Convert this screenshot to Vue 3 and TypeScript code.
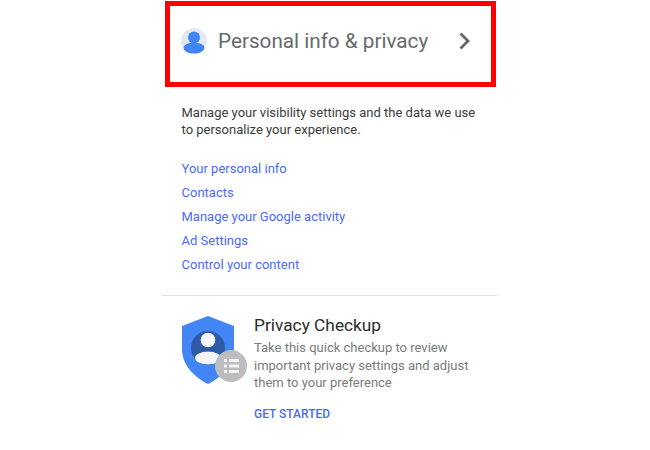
<script setup lang="ts">
const links: string[] = [
  'Your personal info',
  'Contacts',
  'Manage your Google activity',
  'Ad Settings',
  'Control your content',
]
</script>

<template>
  <div class="page">
    <header class="head">
      <svg class="avatar" width="26" height="26" viewBox="0 0 26 26">
        <circle cx="13" cy="13" r="13" fill="#e1e9f3" />
        <circle cx="13" cy="9.5" r="6" fill="#4285f4" />
        <ellipse cx="13" cy="20" rx="10.5" ry="5.5" fill="#4285f4" />
      </svg>
      <span class="title">Personal info &amp; privacy</span>
      <svg class="chevron" width="14" height="20" viewBox="0 0 14 20">
        <path d="M2.5 2.5l7.5 7.5-7.5 7.5" fill="none" stroke="#666" stroke-width="2.8" />
      </svg>
    </header>
    <p class="intro">Manage your visibility settings and the data we use to personalize your experience.</p>
    <nav class="links">
      <a v-for="l in links" :key="l" class="link">{{ l }}</a>
    </nav>
    <section class="checkup">
      <div class="badge">
        <svg width="67" height="68" viewBox="0 0 67 68">
          <path d="M27 0L53 10V33C53 49 41 61 27 68C13 61 1 49 1 33V10Z" fill="#4285f4" />
          <circle cx="27" cy="32" r="17" fill="#2f5aa8" />
          <circle cx="27" cy="24" r="7.3" fill="#f4f6fa" />
          <ellipse cx="27" cy="42" rx="13" ry="6.5" fill="#f4f6fa" />
          <circle cx="50" cy="50" r="16" fill="#bdbdbf" />
          <g fill="#f4f4f4">
            <rect x="43" y="43" width="3" height="3" />
            <rect x="48" y="43" width="10" height="3" />
            <rect x="43" y="48.5" width="3" height="3" />
            <rect x="48" y="48.5" width="10" height="3" />
            <rect x="43" y="54" width="3" height="3" />
            <rect x="48" y="54" width="10" height="3" />
          </g>
        </svg>
      </div>
      <div class="body">
        <h2 class="check-title">Privacy Checkup</h2>
        <p class="check-text">Take this quick checkup to review important privacy settings and adjust them to your preference</p>
        <a class="cta">GET STARTED</a>
      </div>
    </section>
    <div class="frame"></div>
  </div>
</template>

<style>
html, body { margin: 0; background: #fff; }
</style>

<style scoped>
.page {
  position: relative;
  width: 650px;
  height: 450px;
  overflow: hidden;
  padding: 0 0 0 161px;
  box-sizing: border-box;
  font-family: Roboto, "Liberation Sans", sans-serif;
  background: #fff;
}
.head {
  display: flex;
  align-items: center;
  width: 336px;
  height: 82px;
  padding: 0 25px 0 20px;
  box-sizing: border-box;
}
.avatar { flex: none; }
.title {
  margin-left: 11px;
  font-size: 20.7px;
  color: #666a6e;
  white-space: nowrap;
}
.chevron { margin-left: auto; flex: none; }
.intro {
  width: 300px;
  margin: 22px 0 0 20.5px;
  font-size: 13px;
  line-height: 17px;
  color: #3c3c3c;
}
.links {
  display: flex;
  flex-direction: column;
  gap: 6px;
  margin: 22px 0 0 20.5px;
}
.link {
  font-size: 13px;
  line-height: 18px;
  color: #4a6cf7;
}
.checkup {
  display: flex;
  width: 336px;
  margin-top: 21px;
  padding: 20px 0 0 20px;
  border-top: 1px solid #e0e0e0;
  box-sizing: border-box;
}
.badge { width: 73px; flex: none; }
.body { flex: 1; margin-top: -1px; }
.check-title {
  margin: 0;
  font-size: 17.3px;
  font-weight: 400;
  line-height: 20px;
  color: #2b2b2b;
}
.check-text {
  width: 225px;
  margin: 4px 0 0;
  font-size: 13px;
  line-height: 17.5px;
  color: #7b7b7b;
}
.cta {
  display: block;
  margin-top: 15px;
  font-size: 12px;
  font-weight: 500;
  color: #4a6cf7;
}
.frame {
  position: absolute;
  left: 165px;
  top: 1px;
  width: 331px;
  height: 86px;
  border: 5px solid #f00;
  box-sizing: border-box;
}
</style>
